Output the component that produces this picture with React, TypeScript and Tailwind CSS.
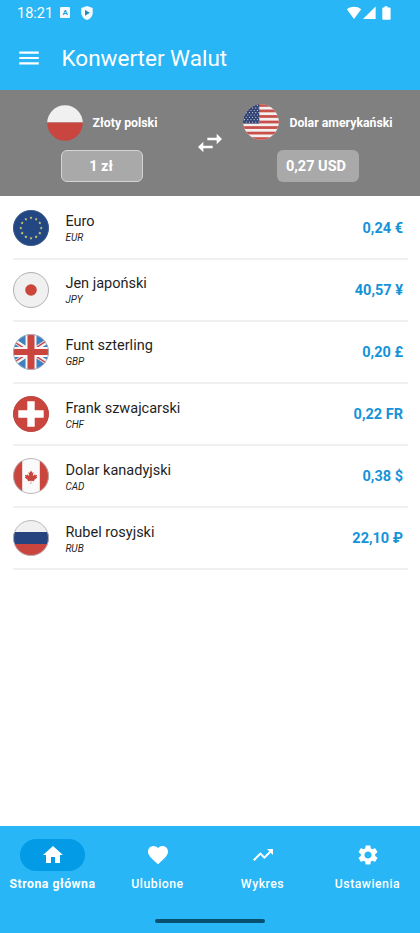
import React from "react";
import { MdFavorite, MdHome, MdMenu, MdSettings, MdTrendingUp } from "react-icons/md";

interface Currency {
  code: string;
  name: string;
  value: string;
  flag: React.ReactNode;
}

interface NavItem {
  label: string;
  icon: React.ReactNode;
  active?: boolean;
}

const starAngles = [0, 30, 60, 90, 120, 150, 180, 210, 240, 270, 300, 330];

function Flag({ id, outline, children }: { id: string; outline?: string; children: React.ReactNode }) {
  return (
    <svg viewBox="0 0 36 36" className="size-9 shrink-0">
      <clipPath id={`flag-${id}`}>
        <circle cx="18" cy="18" r="17.8" />
      </clipPath>
      <g clipPath={`url(#flag-${id})`}>{children}</g>
      {outline && <circle cx="18" cy="18" r="17.5" fill="none" stroke={outline} strokeWidth="0.9" />}
    </svg>
  );
}

const PolandFlag = () => (
  <Flag id="pl">
    <path fill="#f0f0f0" d="M0 0h36v17.500H0z" />
    <path fill="#c8463f" d="M0 17.500h36V36H0z" />
  </Flag>
);

const UsaFlag = () => (
  <Flag id="us">
    <path fill="#f4f0f0" d="M0 0h36v36H0z" />
    {[0, 1, 2, 3, 4, 5, 6].map((i) => (
      <rect key={i} y={i * 5.54} width="36" height="2.77" fill="#c8504b" />
    ))}
    <path fill="#304272" d="M0 0h16.3v19.4H0z" />
    {[0, 1, 2, 3, 4, 5, 6, 7].map((row) =>
      [0, 1, 2, 3, 4].map((col) => (
        <circle
          key={`${row}-${col}`}
          cx={1.6 + col * 3.2 + (row % 2) * 1.6}
          cy={1.6 + row * 2.35}
          r="0.6"
          fill="#d5dae6"
        />
      ))
    )}
  </Flag>
);

const EuFlag = () => (
  <Flag id="eu" outline="#3d5c8c">
    <path fill="#234782" d="M0 0h36v36H0z" />
    {starAngles.map((angle) => (
      <path
        key={angle}
        transform={`rotate(${angle} 18 18) translate(18 7.8) rotate(${-angle})`}
        fill="#d9cd6b"
        d="M0-1.6.5-.5 1.6-.4.7.3 1 1.4 0 .8-1 1.4-.7.3-1.6-.4-.5-.5z"
      />
    ))}
  </Flag>
);

const JapanFlag = () => (
  <Flag id="jp" outline="#a9a9a9">
    <path fill="#f0f0f0" d="M0 0h36v36H0z" />
    <circle cx="18" cy="18" r="5.8" fill="#cb453a" />
  </Flag>
);

const UkFlag = () => (
  <Flag id="gb" outline="#a9b5c4">
    <path fill="#3e7fbf" d="M0 0h36v36H0z" />
    <path stroke="#f6f4f4" strokeWidth="4.6" d="M-6 2 42 34M42 2-6 34" />
    <path stroke="#cb453f" strokeWidth="1.5" d="M-6 2.800 18 18.800M18 18.800 42 34.800M42 1.200 18 17.200M18 17.200-6 33.200" />
    <path fill="#f6f4f4" d="M12.500 0h11v36h-11zM0 13h36v10H0z" />
    <path fill="#cb453f" d="M14.5 0h7v36h-7zM0 15h36v6H0z" />
  </Flag>
);

const SwissFlag = () => (
  <Flag id="ch" outline="#b9463f">
    <path fill="#cb453f" d="M0 0h36v36H0z" />
    <path fill="#fff" d="M14.3 5.2h7.4v9.1h9v7.4h-9v9.1h-7.4v-9.1h-9v-7.4h9z" />
  </Flag>
);

const CanadaFlag = () => (
  <Flag id="ca" outline="#b5b0b0">
    <path fill="#fafafa" d="M0 0h36v36H0z" />
    <path fill="#cb453f" d="M0 0h9.2v36H0zM26.8 0H36v36h-9.2z" />
    <path
      transform="translate(18 19.2) scale(0.0034)"
      fill="#cb453f"
      d="m-90 2030 45-863a95 95 0 0 0-111-98l-859 151 116-320a65 65 0 0 0-20-73l-941-762 212-99a65 65 0 0 0 34-79l-186-572 542 115a65 65 0 0 0 73-38l105-247 423 454a65 65 0 0 0 111-57l-204-1052 327 189a65 65 0 0 0 91-27l332-652 332 652a65 65 0 0 0 91 27l327-189-204 1052a65 65 0 0 0 111 57l423-454 105 247a65 65 0 0 0 73 38l542-115-186 572a65 65 0 0 0 34 79l212 99-941 762a65 65 0 0 0-20 73l116 320-859-151a95 95 0 0 0-111 98l45 863z"
    />
  </Flag>
);

const RussiaFlag = () => (
  <Flag id="ru" outline="#b3b3b8">
    <path fill="#f0f0f0" d="M0 0h36v12H0z" />
    <path fill="#26437f" d="M0 12h36v12H0z" />
    <path fill="#cb453f" d="M0 24h36v12H0z" />
  </Flag>
);

const currencies: Currency[] = [
  { code: "EUR", name: "Euro", value: "0,24 €", flag: <EuFlag /> },
  { code: "JPY", name: "Jen japoński", value: "40,57 ¥", flag: <JapanFlag /> },
  { code: "GBP", name: "Funt szterling", value: "0,20 £", flag: <UkFlag /> },
  { code: "CHF", name: "Frank szwajcarski", value: "0,22 FR", flag: <SwissFlag /> },
  { code: "CAD", name: "Dolar kanadyjski", value: "0,38 $", flag: <CanadaFlag /> },
  { code: "RUB", name: "Rubel rosyjski", value: "22,10 ₽", flag: <RussiaFlag /> },
];

const navItems: NavItem[] = [
  { label: "Strona główna", icon: <MdHome />, active: true },
  { label: "Ulubione", icon: <MdFavorite /> },
  { label: "Wykres", icon: <MdTrendingUp /> },
  { label: "Ustawienia", icon: <MdSettings /> },
];

function StatusBar() {
  return (
    <div className="flex h-[25px] items-center pl-[17px] pr-7">
      <span className="pt-[3px] text-[14.5px] leading-none">18:21</span>
      <span className="ml-[7px] flex h-[11px] w-[10px] items-center justify-center rounded-[1px] bg-[#f2faff] text-[8px] leading-none font-bold text-[#29a0dc]">
        A
      </span>
      <svg viewBox="0 0 12 14" className="ml-[11px] h-[14px] w-[12px]">
        <path fill="#f2faff" d="M6 0l5.700 2v5c0 3.300-2.400 5.900-5.700 7C2.700 12.900.3 10.300.3 7V2z" />
        <path fill="#2389b9" d="M4 3.900l4.900 2.900L4 9.700z" />
      </svg>
      <svg viewBox="0 0 46 14" className="ml-auto h-[14px] w-[46px]" fill="#fff">
        <path d="M.8 3.200C4.800-.1 11.200-.1 15.200 3.200L8 13z" />
        <path d="M29.600.5v12.600H17z" />
        <path d="M38.500.3h3v1.200h2.300c.5 0 .8.300.8.800v10.600c0 .5-.3.800-.8.800h-6.700c-.5 0-.8-.3-.8-.8V2.300c0-.5.3-.8.8-.8h1.400z" />
      </svg>
    </div>
  );
}

function Converter() {
  return (
    <section className="flex h-[106px] bg-[#808080] px-2 text-white">
      <div className="flex flex-1 flex-col items-center pt-[14.5px]">
        <div className="flex items-center gap-[10px]">
          <PolandFlag />
          <span className="pt-[2px] text-[12.3px] font-bold whitespace-nowrap">Złoty polski</span>
        </div>
        <div className="mt-[9.5px] flex h-8 w-[82px] items-center justify-center rounded-[6px] border border-[#d4d4d4] bg-[#a9a9a9] pt-[2px] pr-[2px] text-[14.5px] font-bold">
          1 zł
        </div>
      </div>
      <svg viewBox="1.5 1.5 21 21" className="mt-[39px] size-7 shrink-0" fill="#fff">
        <path d="M6.99 11 3 15l3.99 4v-3H14v-2H6.99zM21 9l-3.99-4v3H10v2h7.01v3z" />
      </svg>
      <div className="flex flex-1 flex-col items-center pt-[14px]">
        <div className="flex items-center gap-[10px]">
          <UsaFlag />
          <span className="pt-[2px] text-[12.3px] font-bold whitespace-nowrap">Dolar amerykański</span>
        </div>
        <div className="mt-[10px] flex h-8 w-[82px] items-center justify-center rounded-[6px] bg-[#a9a9a9] pt-[2px] pr-[4px] text-[14.5px] font-bold">
          0,27 USD
        </div>
      </div>
    </section>
  );
}

function CurrencyRow({ currency }: { currency: Currency }) {
  return (
    <li className="flex h-[62.17px] items-center border-b-2 border-[#f0f0f0]">
      {currency.flag}
      <div className="ml-4 flex-1 pt-[3px] text-[#1f1f1f]">
        <p className="text-[14.5px] leading-[18px]">{currency.name}</p>
        <p className="text-[10px] leading-[14px] italic">{currency.code}</p>
      </div>
      <span className="pt-[2px] pr-[5px] text-[14.5px] font-bold text-[#1593d8]">{currency.value}</span>
    </li>
  );
}

function BottomNav() {
  return (
    <nav className="flex h-[107px] flex-col items-center bg-[#29b6f6] text-white">
      <div className="grid w-full grid-cols-4 pt-[13px]">
        {navItems.map((item) => (
          <div key={item.label} className="flex flex-col items-center">
            <span
              className={`flex h-8 w-[65px] items-center justify-center rounded-full text-[24px] ${
                item.active ? "bg-[#039be5]" : ""
              }`}
            >
              {item.icon}
            </span>
            <span
              className={`mt-1 text-[12.25px] leading-[18px] tracking-[0.5px] whitespace-nowrap ${
                item.active ? "font-bold" : "font-medium"
              }`}
            >
              {item.label}
            </span>
          </div>
        ))}
      </div>
      {/* Gesture bar */}
      <div className="mt-auto mb-[10.5px] h-1 w-[110px] rounded-full bg-[#085070]" />
    </nav>
  );
}

export default function App() {
  return (
    <div className="flex h-[933px] w-[420px] flex-col overflow-hidden bg-white font-[Roboto,sans-serif]">
      <header className="h-[90px] bg-[#29b6f6] text-white">
        <StatusBar />
        <div className="flex h-[65px] items-center pl-[15.5px]">
          <MdMenu className="size-[26px]" />
          <h1 className="ml-5 pt-[2px] text-[22.5px] leading-none">Konwerter Walut</h1>
        </div>
      </header>
      <Converter />
      <ul className="flex-1 pt-[1.5px] pr-3 pl-[13.4px]">
        {currencies.map((currency) => (
          <CurrencyRow key={currency.code} currency={currency} />
        ))}
      </ul>
      <BottomNav />
    </div>
  );
}
